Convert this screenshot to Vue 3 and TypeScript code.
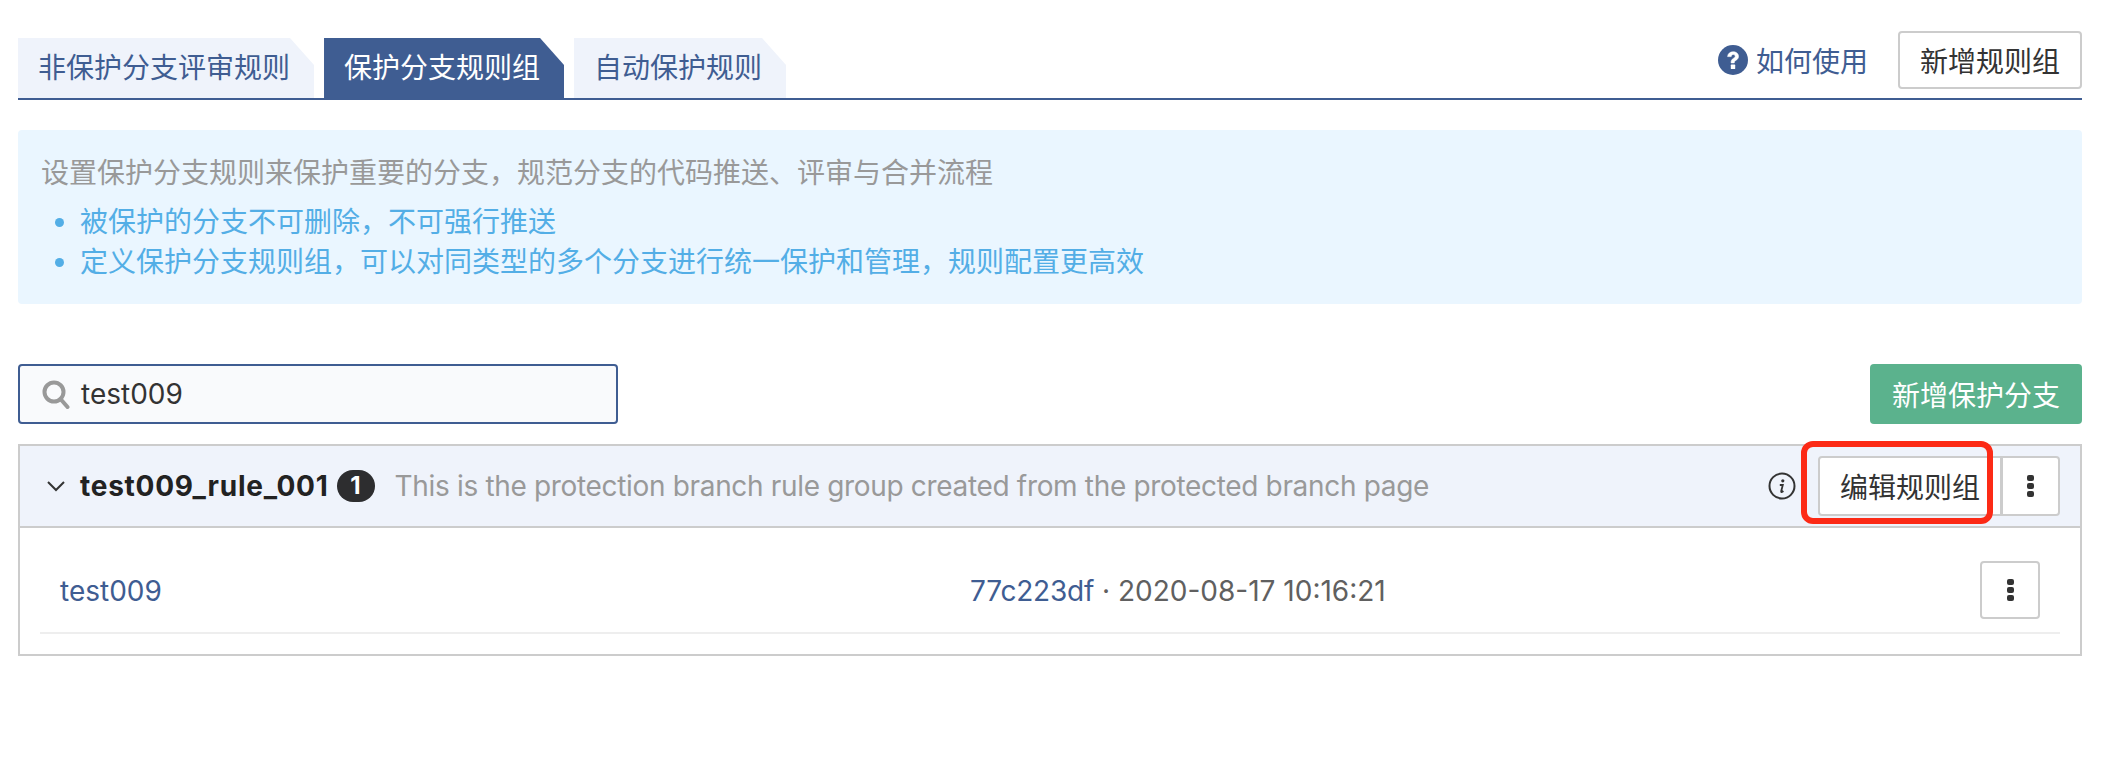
<script setup lang="ts">
const tabs = [
  { label: '非保护分支评审规则', active: false },
  { label: '保护分支规则组', active: true },
  { label: '自动保护规则', active: false }
]

const tips = ['被保护的分支不可删除，不可强行推送', '定义保护分支规则组，可以对同类型的多个分支进行统一保护和管理，规则配置更高效']
</script>

<template>
  <div class="page">
    <div class="head">
      <div class="tabs">
        <div v-for="tab in tabs" :key="tab.label" class="tab" :class="{ 'tab--active': tab.active }">{{ tab.label }}</div>
      </div>
      <div class="head__side">
        <span class="help">
          <svg class="help__icon" width="30" height="30" viewBox="0 0 30 30">
            <circle cx="15" cy="15" r="15" fill="#3f5d92" />
            <path d="M9.600 11.600c.3-3.100 2.500-4.800 5.500-4.800 3.100 0 5.400 1.800 5.400 4.500 0 2.100-1.200 3.200-2.700 4.100-1.200.8-1.500 1.200-1.500 2.500h-3.200c-.1-2.400.7-3.500 2.200-4.500 1.200-.8 1.900-1.200 1.900-2.200 0-1-.9-1.700-1.900-1.700-1.200 0-1.900.8-2.100 2.100z" fill="#fff" stroke="#fff" stroke-width="0.600" />
            <rect x="12.800" y="19.600" width="4.400" height="4.400" rx="0.600" fill="#fff" />
          </svg>
          如何使用
        </span>
        <button class="btn">新增规则组</button>
      </div>
    </div>

    <div class="notice">
      <p>设置保护分支规则来保护重要的分支，规范分支的代码推送、评审与合并流程</p>
      <ul>
        <li v-for="tip in tips" :key="tip">{{ tip }}</li>
      </ul>
    </div>

    <div class="toolbar">
      <div class="search">
        <svg width="30" height="30" viewBox="0 0 30 30" fill="none" stroke="#999" stroke-width="4">
          <circle cx="13" cy="13" r="9.500" />
          <path d="M19.500 20l7 8" stroke-linecap="round" />
        </svg>
        <span>test009</span>
      </div>
      <button class="btn btn--green">新增保护分支</button>
    </div>

    <div class="group">
      <div class="group__head">
        <svg class="chevron" width="20" height="12" viewBox="0 0 20 12" fill="none" stroke="#333" stroke-width="2">
          <path d="M2 2l8 8 8-8" />
        </svg>
        <strong class="group__name">test009_rule_001</strong>
        <span class="badge">1</span>
        <span class="group__desc">This is the protection branch rule group created from the protected branch page</span>
        <svg class="info" width="28" height="28" viewBox="0 0 28 28" fill="none">
          <circle cx="14" cy="14" r="12.500" stroke="#333" stroke-width="2" />
          <circle cx="14.800" cy="8.800" r="1.600" fill="#333" />
          <path d="M11.800 13h3l-1.600 6.300c-.2.800.5 1 1.200.5l1-.8" stroke="#333" stroke-width="1.800" />
        </svg>
        <div class="actions">
          <button class="btn btn--edit">编辑规则组</button>
          <button class="btn btn--more" aria-label="更多">
            <i /><i /><i />
          </button>
        </div>
        <div class="highlight" />
      </div>
      <div class="row">
        <a class="row__name">test009</a>
        <span class="row__meta"><a>77c223df</a> · 2020-08-17 10:16:21</span>
        <button class="btn btn--more" aria-label="更多">
          <i /><i /><i />
        </button>
      </div>
    </div>
  </div>
</template>

<style>
body {
  background: #fff;
}
</style>

<style scoped>
.page {
  width: 2064px;
  padding: 31px 0 0 18px;
  font-family: Inter, "Noto Sans CJK SC", sans-serif;
  font-size: 28px;
  color: #333;
}

.head {
  display: flex;
  justify-content: space-between;
  border-bottom: 2px solid #3f5d92;
}

.tabs {
  display: flex;
  align-items: flex-end;
  gap: 10px;
}

.tab {
  height: 60px;
  padding: 0 24px 0 20px;
  line-height: 60px;
  color: #3f5d92;
  background: #eff3fb;
  clip-path: polygon(0 0, calc(100% - 24px) 0, 100% 27px, 100% 100%, 0 100%);
}

.tab--active {
  color: #fff;
  background: #3f5d92;
}

.head__side {
  display: flex;
  align-items: center;
  gap: 30px;
  margin-bottom: 9px;
}

.help {
  display: flex;
  align-items: center;
  gap: 8px;
  color: #3f5d92;
}

.btn {
  box-sizing: border-box;
  height: 58px;
  padding: 0 20px;
  border: 2px solid #ccc;
  border-radius: 4px;
  background: #fff;
  color: #333;
  font: inherit;
}

.notice {
  box-sizing: border-box;
  height: 174px;
  margin-top: 30px;
  padding: 23px 23px;
  border-radius: 4px;
  background: #eaf6ff;
  line-height: 40px;
  color: #999;
}

.notice p {
  margin: 0 0 9px;
}

.notice ul {
  margin: 0;
  padding: 0 0 0 39px;
  color: #53aee6;
}

.toolbar {
  display: flex;
  justify-content: space-between;
  margin-top: 60px;
}

.search {
  box-sizing: border-box;
  display: flex;
  align-items: center;
  gap: 10px;
  width: 600px;
  height: 60px;
  padding-left: 21px;
  border: 2px solid #3f5d92;
  border-radius: 4px;
  background: #f9fafc;
}

.btn--green {
  height: 60px;
  padding: 0 22px;
  border: 0;
  background: #5bb28d;
  color: #fff;
}

.group {
  margin-top: 20px;
  padding-bottom: 19px;
  border: 2px solid #ccc;
}

.group__head {
  position: relative;
  display: flex;
  align-items: center;
  box-sizing: border-box;
  height: 82px;
  padding: 0 20px 0 26px;
  border-bottom: 2px solid #ccc;
  background: #eff3fb;
}

.group__name {
  margin-left: 14px;
  color: #222;
  letter-spacing: 0.75px;
}

.badge {
  box-sizing: border-box;
  width: 38px;
  height: 32px;
  margin-left: 8px;
  border-radius: 16px;
  background: #2d2d2f;
  color: #fff;
  font-size: 24px;
  font-weight: 700;
  line-height: 32px;
  text-align: center;
}

.group__desc {
  margin-left: 20px;
  color: #999;
  letter-spacing: -0.33px;
}

.info {
  margin-left: auto;
  margin-right: 22px;
}

.actions {
  display: flex;
}

.btn--edit {
  width: 184px;
  height: 60px;
  padding: 0;
  border-radius: 4px 0 0 4px;
}

.btn--more {
  display: flex;
  flex-direction: column;
  align-items: center;
  justify-content: center;
  gap: 2px;
  width: 60px;
  height: 58px;
  padding: 0;
}

.btn--more i {
  width: 7px;
  height: 6px;
  border-radius: 2px;
  background: #333;
}

.actions .btn--more {
  width: 59px;
  height: 60px;
  margin-left: -1px;
  border-radius: 0 4px 4px 0;
}

.highlight {
  position: absolute;
  left: 1781px;
  top: -5px;
  width: 192px;
  height: 83px;
  box-sizing: border-box;
  border: 6px solid #fc2a16;
  border-radius: 12px;
  pointer-events: none;
}

.row {
  display: flex;
  align-items: center;
  height: 106px;
  box-sizing: border-box;
  margin: 0 20px 1px;
  padding: 19px 20px 0;
  border-bottom: 2px solid #eee;
}

.row__name {
  width: 910px;
  padding-top: 2px;
  color: #3f5d92;
}

.row__meta {
  padding-top: 2px;
  color: #606060;
}

.row__meta a {
  color: #3f5d92;
  letter-spacing: -0.2px;
}

.row .btn--more {
  margin-left: auto;
}
</style>
